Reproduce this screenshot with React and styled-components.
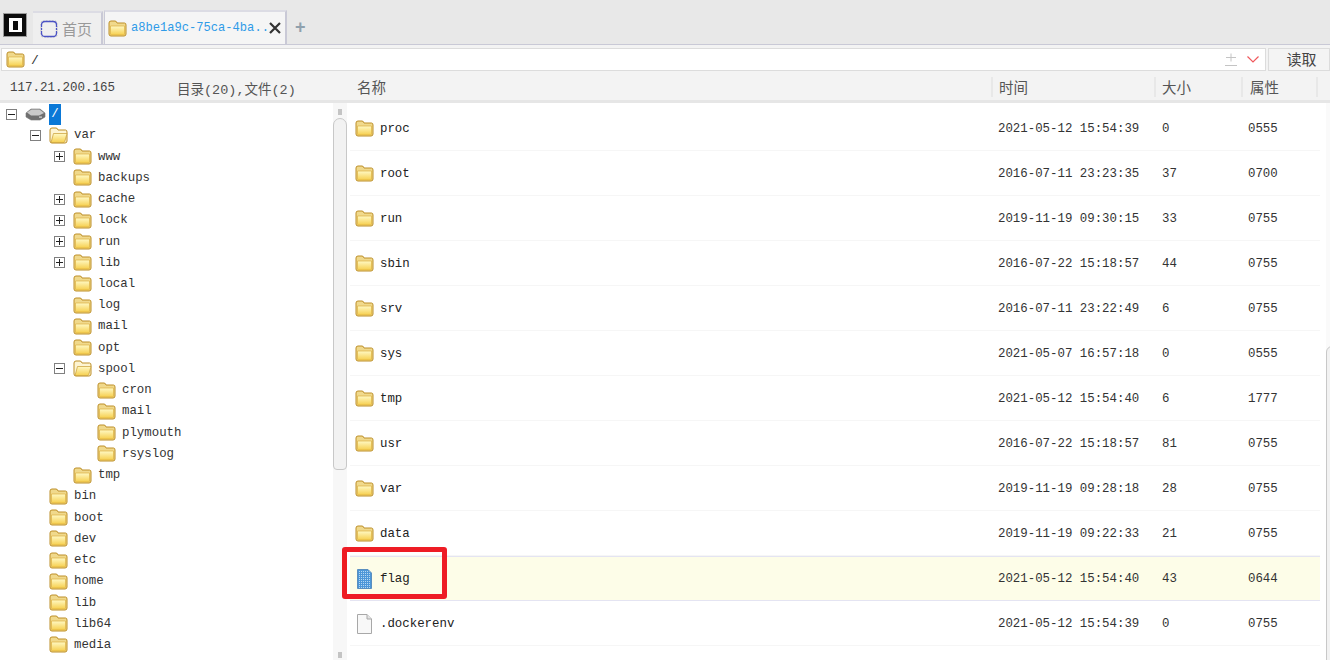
import React from 'react';
import styled, { createGlobalStyle } from 'styled-components';

const Global = createGlobalStyle`
  html, body { margin: 0; padding: 0; background: #fff; overflow: hidden; }
  * { box-sizing: border-box; }
`;

const MONO = `"Liberation Mono", "Noto Sans CJK SC", monospace`;
const CJK = `"Noto Sans CJK SC", "Noto Sans", sans-serif`;
const COLS = '636px 163px 87px 75px 1fr';
const HEAD_COLS = '636px 163px 87px 75px';

const Page = styled.div`
  width: 1330px;
  height: 660px;
  display: flex;
  flex-direction: column;
  overflow: hidden;
  background: #fff;
  font-family: ${MONO};
  font-size: 12.4px;
  color: #333;
`;

const TabBar = styled.div`
  height: 45px;
  flex: none;
  display: flex;
  align-items: flex-end;
  padding-left: 4px;
  background: #e8e8e8;
  border-bottom: 1px solid #c9c9d6;
`;

const AppLogo = styled.div`
  width: 22px;
  height: 22px;
  margin-bottom: 8px;
  margin-right: 7px;
  background: #0c0c0c;
  box-shadow: 0 0 0 1px #9a9a9a;
  display: flex;
  align-items: center;
  justify-content: center;
  &::after {
    content: '';
    box-sizing: border-box;
    width: 13px;
    height: 14px;
    border-style: solid;
    border-color: #fff;
    border-width: 3px 4px 2px;
    background: #0c0c0c;
  }
`;

const Tab = styled.div`
  height: ${p => (p.$active ? 34 : 33)}px;
  width: ${p => (p.$active ? 183 : 70)}px;
  margin-left: ${p => (p.$active ? 1 : 0)}px;
  padding-left: ${p => (p.$active ? 3 : 7)}px;
  display: flex;
  align-items: center;
  gap: 4px;
  background: ${p => (p.$active ? '#f5f5f5' : '#efefef')};
  border-top: 2px solid #dcdce4;
  border-right: 2px solid #c9c9d6;
  border-left: ${p => (p.$active ? '1px solid #c9c9d6' : 'none')};
`;

const TabHomeLabel = styled.span`
  font-family: ${CJK};
  font-size: 15px;
  color: #999;
`;

const TabLabel = styled.span`
  width: 137px;
  flex: none;
  font-size: 12.1px;
  color: #2f9be8;
  white-space: nowrap;
`;

const AddTab = styled.div`
  margin: 0 0 7px 8px;
  font-family: "Liberation Sans", sans-serif;
  font-size: 18px;
  font-weight: 700;
  line-height: 20px;
  color: #8fa0ad;
`;

const AddressRow = styled.div`
  height: 27px;
  flex: none;
  display: flex;
  padding: 3px 0 0 1px;
  background: #f3f3f3;
`;

const AddressInput = styled.div`
  width: 1265px;
  height: 23px;
  display: flex;
  align-items: center;
  padding: 0 4px;
  gap: 6px;
  background: #fff;
  border: 1px solid #dcdcdc;
  font-size: 13px;
`;

const AddressPath = styled.span`
  flex: 1;
  padding-top: 2px;
`;

const ReadButton = styled.div`
  flex: 1;
  height: 23px;
  margin-left: 2px;
  padding: 0 0 2px 5px;
  display: flex;
  align-items: center;
  justify-content: center;
  font-family: ${CJK};
  font-size: 15px;
  color: #444;
  background: #f4f4f4;
  border: 1px solid #dcdcdc;
`;

const InfoRow = styled.div`
  height: 31px;
  flex: none;
  display: flex;
  background: #f3f3f3;
  border-bottom: 3px solid #e6e6e6;
`;

const InfoLeft = styled.div`
  width: 350px;
  flex: none;
  display: flex;
  align-items: center;
  padding: 3px 0 0 10px;
`;

const HostName = styled.span`
  width: 167px;
  color: #444;
  font-size: 12.5px;
`;

const Counts = styled.span`
  font-size: 13.5px;
  color: #555;
  white-space: nowrap;
`;

const HeaderGrid = styled.div`
  flex: 1;
  display: grid;
  grid-template-columns: ${HEAD_COLS};
  align-items: center;
  padding: 2px 0 0 7px;
`;

const HeaderCell = styled.div`
  height: 20px;
  padding-left: ${p => p.$pad || 0}px;
  border-right: 2px solid #e8e8e8;
  font-family: ${CJK};
  font-size: 14.5px;
  line-height: 20px;
  color: #555;
`;

const Body = styled.div`
  flex: 1;
  min-height: 0;
  display: flex;
`;

const TreePane = styled.div`
  width: 333px;
  flex: none;
  overflow: hidden;
  padding-top: 0.5px;
`;

const TreeRow = styled.div`
  height: 21.24px;
  display: flex;
  align-items: center;
  padding-left: ${p => 6 + p.$level * 24}px;
  white-space: nowrap;
`;

const Expander = styled.div`
  width: 11px;
  height: 11px;
  margin-right: 8px;
  flex: none;
  border: 1px solid #808080;
  background: #fff;
  position: relative;
  visibility: ${p => (p.$none ? 'hidden' : 'visible')};
  &::before {
    content: '';
    position: absolute;
    left: 1px;
    right: 1px;
    top: 4px;
    height: 1px;
    background: #222;
  }
  &::after {
    content: '';
    display: ${p => (p.$open ? 'none' : 'block')};
    position: absolute;
    top: 1px;
    bottom: 1px;
    left: 4px;
    width: 1px;
    background: #222;
  }
`;

const TreeLabel = styled.span`
  margin-left: 6px;
  color: #333;
`;

const RootLabel = styled.span`
  margin-left: 3px;
  width: 12px;
  height: 21px;
  display: flex;
  align-items: center;
  justify-content: center;
  background: #0a78d7;
  color: #fff;
`;

const TreeScroll = styled.div`
  width: 14px;
  flex: none;
  display: flex;
  flex-direction: column;
  align-items: center;
  padding: 6px 0 2px;
  background: #f7f7f7;
`;

const ScrollArrow = styled.div`
  width: 4px;
  height: 6px;
  flex: none;
  background: #c4c4c4;
  margin-top: ${p => (p.$bottom ? 'auto' : 0)};
`;

const TreeThumb = styled.div`
  width: 14px;
  height: 352px;
  margin-top: 3px;
  flex: none;
  background: #f2f2f2;
  border: 1px solid #c8c8c8;
  border-radius: 7px 7px 4px 4px;
`;

const Splitter = styled.div`
  width: 3px;
  flex: none;
  background: #fff;
`;

const ListPane = styled.div`
  flex: 1;
  padding-top: 3px;
  min-width: 0;
`;

const FileRow = styled.div`
  position: relative;
  height: 45px;
  display: grid;
  grid-template-columns: ${COLS};
  align-items: center;
  padding-left: 5px;
  border-bottom: 1px solid ${p => (p.$selected ? '#e4e4f2' : '#f6f6f6')};
  border-top: 1px solid ${p => (p.$selected ? '#e4e4f2' : 'transparent')};
  background: ${p => (p.$selected ? '#fdfde8' : '#fff')};
`;

const NameCell = styled.div`
  display: flex;
  align-items: center;
  color: #222;
`;

const IconSlot = styled.div`
  width: 25px;
  flex: none;
  display: flex;
  align-items: center;
  padding-left: ${p => p.$pad || 0}px;
`;

const Cell = styled.div`
  padding-left: ${p => p.$pad}px;
  color: #333;
`;

const Highlight = styled.div`
  position: absolute;
  left: -8px;
  top: -10px;
  width: 105px;
  height: 52px;
  border: 5px solid #ee1c25;
  border-radius: 3px;
  pointer-events: none;
`;

const ListScroll = styled.div`
  width: 4px;
  margin-left: 6px;
  flex: none;
  padding-top: 243px;
  background: #fafafa;
`;

const ListThumb = styled.div`
  height: 320px;
  margin-right: -4px;
  background: #f2f2f2;
  border: 1px solid #c8c8c8;
  border-radius: 6px 0 0 0;
`;

const FolderIcon = ({ open, size = 19 }) => (
  <svg width={size} height={(size * 17) / 19} viewBox="0 0 19 17" style={{ flex: 'none' }}>
    <defs>
      <linearGradient id="folderFront" x1="0" y1="0" x2="0" y2="1">
        <stop offset="0" stopColor="#fff9c4" />
        <stop offset="1" stopColor="#f6cf4e" />
      </linearGradient>
    </defs>
    <path
      d="M1 3 Q1 1 3 1 H7 Q8.5 1 9 3 H16.5 Q18 3 18 5 V14 Q18 16 16 16 H3 Q1 16 1 14 Z"
      fill={open ? '#fdf4d2' : '#f0d98c'}
      stroke="#bd8f28"
    />
    <path
      d={open ? 'M4.5 6.5 H18 L15.8 14.5 Q15.5 15.6 14 15.6 H2 Z' : 'M2.5 6 H16.5 V14 Q16.5 15 15.5 15 H3.5 Q2.5 15 2.5 14 Z'}
      fill="url(#folderFront)"
      stroke={open ? '#c79c33' : '#dcb040'}
      strokeWidth="0.7"
    />
  </svg>
);

const DriveIcon = () => (
  <svg width="21" height="13" viewBox="0 0 21 13" style={{ flex: 'none' }}>
    <path d="M1 5 L6 1 H15 L20 5 V9 L15 12 H6 L1 9 Z" fill="#6f6f6f" stroke="#777" strokeWidth="0.6" />
    <path d="M2 4.5 L6.5 1.5 H14.5 L19 5 L14 7.5 H6 Z" fill="#c9c9c9" />
    <rect x="14" y="8.5" width="3" height="1.2" fill="#d8d8d8" />
  </svg>
);

const FlagFileIcon = () => (
  <svg width="15" height="20" viewBox="0 0 15 20" style={{ flex: 'none' }}>
    <defs>
      <pattern id="dots" width="2" height="2" patternUnits="userSpaceOnUse">
        <rect width="2" height="2" fill="#4d97d8" />
        <rect width="1" height="1" fill="#b5d8f2" />
      </pattern>
    </defs>
    <path d="M0.5 0.5 H11 L14.5 4 V19.5 H0.5 Z" fill="url(#dots)" stroke="#5a8fbf" />
  </svg>
);

const PlainFileIcon = () => (
  <svg width="15" height="20" viewBox="0 0 15 20" style={{ flex: 'none' }}>
    <path d="M0.5 0.5 H10 L14.5 5 V19.5 H0.5 Z" fill="#f8f8f8" stroke="#a8a8a8" />
    <path d="M10 0.5 V5 H14.5" fill="#e4e4e4" stroke="#a8a8a8" />
  </svg>
);

const HomeIcon = () => (
  <svg width="18" height="18" viewBox="0 0 18 18" style={{ flex: 'none' }}>
    <rect x="1" y="1" width="16" height="16" rx="2" fill="none" stroke="#bbb" strokeDasharray="1.5 1.5" />
    <path d="M1.5 5 Q1.5 1.5 5 1.5 H13 Q16.5 1.5 16.5 5 M16.5 13 Q16.5 16.5 13 16.5 H5 Q1.5 16.5 1.5 13" fill="none" stroke="#4a52c4" strokeWidth="1.3" />
    <path d="M1.5 5 V13 M16.5 5 V13" stroke="#4a52c4" strokeWidth="1.3" strokeDasharray="2 1" />
  </svg>
);

const CloseIcon = () => (
  <svg width="12" height="12" viewBox="0 0 12 12" style={{ flex: 'none', marginLeft: -3, position: 'relative' }}>
    <path d="M1 1 L11 11 M11 1 L1 11" stroke="#333" strokeWidth="2.2" />
  </svg>
);

const PlusMinusIcon = () => (
  <svg width="12" height="13" viewBox="0 0 12 13" style={{ flex: 'none', marginRight: 4 }}>
    <path d="M1 4.5 H11 M6 0.5 V8.5 M0 12.5 H12" stroke="#c4c4c4" fill="none" />
  </svg>
);

const ChevronIcon = () => (
  <svg width="12" height="7" viewBox="0 0 12 7" style={{ flex: 'none', marginRight: 2 }}>
    <path d="M0.5 0.5 L6 6 L11.5 0.5" fill="none" stroke="#f0585c" strokeWidth="1.2" />
  </svg>
);

const tree = [
  { name: 'var', level: 1, exp: 'open', folderOpen: true },
  { name: 'www', level: 2, exp: 'closed' },
  { name: 'backups', level: 2 },
  { name: 'cache', level: 2, exp: 'closed' },
  { name: 'lock', level: 2, exp: 'closed' },
  { name: 'run', level: 2, exp: 'closed' },
  { name: 'lib', level: 2, exp: 'closed' },
  { name: 'local', level: 2 },
  { name: 'log', level: 2 },
  { name: 'mail', level: 2 },
  { name: 'opt', level: 2 },
  { name: 'spool', level: 2, exp: 'open', folderOpen: true },
  { name: 'cron', level: 3 },
  { name: 'mail', level: 3 },
  { name: 'plymouth', level: 3 },
  { name: 'rsyslog', level: 3 },
  { name: 'tmp', level: 2 },
  { name: 'bin', level: 1 },
  { name: 'boot', level: 1 },
  { name: 'dev', level: 1 },
  { name: 'etc', level: 1 },
  { name: 'home', level: 1 },
  { name: 'lib', level: 1 },
  { name: 'lib64', level: 1 },
  { name: 'media', level: 1 },
];

const files = [
  ['proc', '2021-05-12 15:54:39', '0', '0555'],
  ['root', '2016-07-11 23:23:35', '37', '0700'],
  ['run', '2019-11-19 09:30:15', '33', '0755'],
  ['sbin', '2016-07-22 15:18:57', '44', '0755'],
  ['srv', '2016-07-11 23:22:49', '6', '0755'],
  ['sys', '2021-05-07 16:57:18', '0', '0555'],
  ['tmp', '2021-05-12 15:54:40', '6', '1777'],
  ['usr', '2016-07-22 15:18:57', '81', '0755'],
  ['var', '2019-11-19 09:28:18', '28', '0755'],
  ['data', '2019-11-19 09:22:33', '21', '0755'],
  ['flag', '2021-05-12 15:54:40', '43', '0644', 'flag'],
  ['.dockerenv', '2021-05-12 15:54:39', '0', '0755', 'plain'],
];

const App = () => (
  <Page>
    <Global />
    <TabBar>
      <AppLogo />
      <Tab>
        <HomeIcon />
        <TabHomeLabel>首页</TabHomeLabel>
      </Tab>
      <Tab $active>
        <FolderIcon />
        <TabLabel>a8be1a9c-75ca-4ba..</TabLabel>
        <CloseIcon />
      </Tab>
      <AddTab>+</AddTab>
    </TabBar>
    <AddressRow>
      <AddressInput>
        <FolderIcon />
        <AddressPath>/</AddressPath>
        <PlusMinusIcon />
        <ChevronIcon />
      </AddressInput>
      <ReadButton>读取</ReadButton>
    </AddressRow>
    <InfoRow>
      <InfoLeft>
        <HostName>117.21.200.165</HostName>
        <Counts>目录(20),文件(2)</Counts>
      </InfoLeft>
      <HeaderGrid>
        <HeaderCell>名称</HeaderCell>
        <HeaderCell $pad={6}>时间</HeaderCell>
        <HeaderCell $pad={6}>大小</HeaderCell>
        <HeaderCell $pad={7}>属性</HeaderCell>
      </HeaderGrid>
    </InfoRow>
    <Body>
      <TreePane>
        <TreeRow $level={0}>
          <Expander $open />
          <DriveIcon />
          <RootLabel>/</RootLabel>
        </TreeRow>
        {tree.map((n, i) => (
          <TreeRow key={i} $level={n.level}>
            <Expander $none={!n.exp} $open={n.exp === 'open'} />
            <FolderIcon open={n.folderOpen} />
            <TreeLabel>{n.name}</TreeLabel>
          </TreeRow>
        ))}
      </TreePane>
      <TreeScroll>
        <ScrollArrow />
        <TreeThumb />
        <ScrollArrow $bottom />
      </TreeScroll>
      <Splitter />
      <ListPane>
        {files.map(([name, time, size, mode, kind]) => (
          <FileRow key={name} $selected={kind === 'flag'}>
            <NameCell>
              <IconSlot $pad={kind ? 2 : 0}>
                {kind === 'flag' ? <FlagFileIcon /> : kind === 'plain' ? <PlainFileIcon /> : <FolderIcon />}
              </IconSlot>
              {name}
            </NameCell>
            <Cell $pad={7}>{time}</Cell>
            <Cell $pad={8}>{size}</Cell>
            <Cell $pad={7}>{mode}</Cell>
            {kind === 'flag' && <Highlight />}
          </FileRow>
        ))}
      </ListPane>
      <ListScroll>
        <ListThumb />
      </ListScroll>
    </Body>
  </Page>
);

export default App;
